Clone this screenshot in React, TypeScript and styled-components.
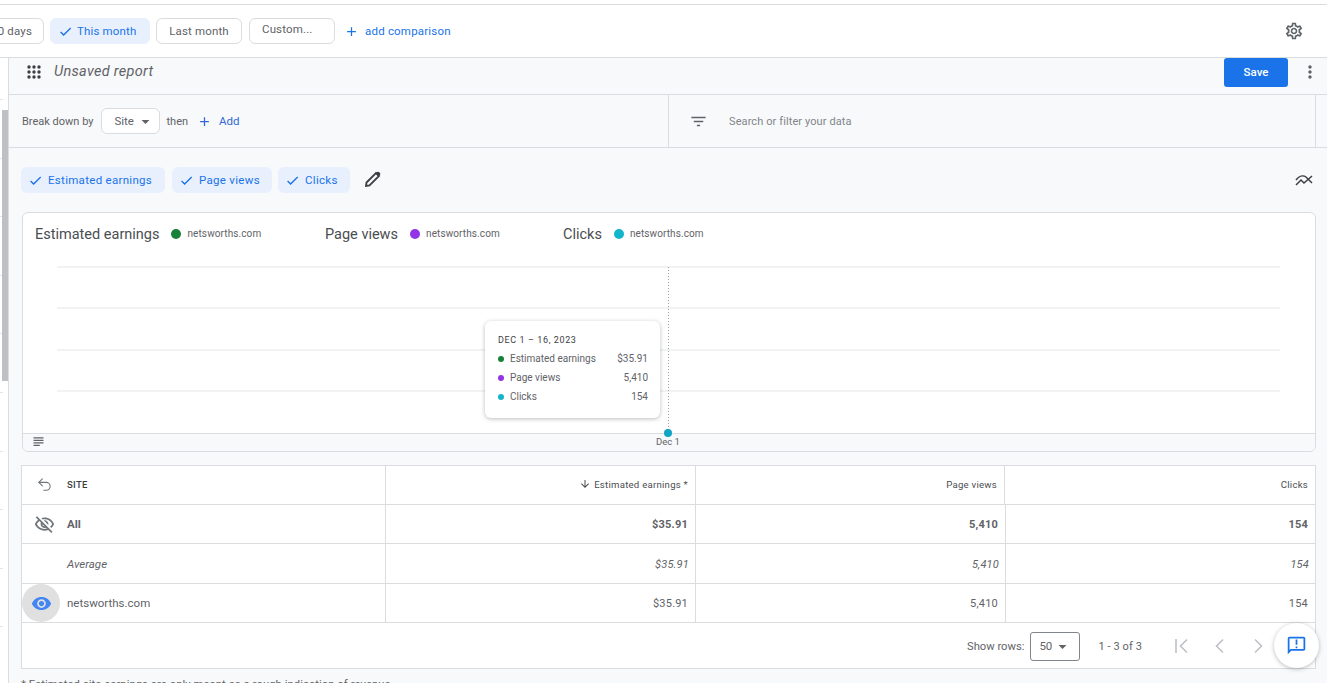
import styled, { createGlobalStyle } from "styled-components";
import { Undo2 } from "lucide-react";
import {
  MdAdd,
  MdArrowDownward,
  MdArrowDropDown,
  MdCheck,
  MdFilterList,
  MdMoreVert,
  MdOutlineAnnouncement,
  MdOutlineSettings,
  MdOutlineVisibilityOff,
  MdSubject,
  MdVisibility,
} from "react-icons/md";

const SITE = "netsworths.com";
const GRID_LINES = [1, 42, 84, 125];

const LEGEND = [
  { label: "Estimated earnings", color: "#188038", width: 290 },
  { label: "Page views", color: "#9334e6", width: 238 },
  { label: "Clicks", color: "#12b5cb", width: 160 },
];

const TOOLTIP = [
  { label: "Estimated earnings", value: "$35.91", color: "#188038" },
  { label: "Page views", value: "5,410", color: "#9334e6" },
  { label: "Clicks", value: "154", color: "#12b5cb" },
];

const GlobalStyle = createGlobalStyle`
  html, body {
    margin: 0;
    padding: 0;
    background: #fff;
    overflow: hidden;
  }
  * {
    box-sizing: border-box;
  }
`;

const Page = styled.div`
  width: 1327px;
  height: 683px;
  overflow: hidden;
  display: flex;
  flex-direction: column;
  font-family: Roboto, "Liberation Sans", sans-serif;
  color: #3c4043;
  background: #fff;
`;

const TopBar = styled.header`
  flex: none;
  height: 54px;
  margin-top: 4px;
  padding: 0 23px 0 0;
  display: flex;
  align-items: center;
  border-top: 1px solid #dadce0;
  border-bottom: 1px solid #dadce0;
`;

const DateChips = styled.div`
  display: flex;
  align-items: center;
  gap: 6px;
  margin-left: -16px;
`;

const DateChip = styled.div<{ $width: number; $active?: boolean }>`
  width: ${(p) => p.$width}px;
  height: 26px;
  display: flex;
  align-items: center;
  justify-content: ${(p) => (p.$active ? "flex-start" : "center")};
  padding: ${(p) => (p.$active ? "0 0 0 7px" : "0")};
  gap: 4px;
  font-size: 11.5px;
  letter-spacing: 0.15px;
  white-space: nowrap;
  border-radius: 6px;
  color: ${(p) => (p.$active ? "#1a73e8" : "#5f6368")};
  background: ${(p) => (p.$active ? "#e8f0fe" : "#fff")};
  border: 1px solid ${(p) => (p.$active ? "#e8f0fe" : "#dadce0")};

  svg {
    font-size: 15px;
  }
`;

const CutChip = styled(DateChip)`
  justify-content: flex-end;
  padding-right: 11px;
`;

const CustomChip = styled(DateChip)`
  margin-left: 1px;
  padding: 0 0 5px 12px;
  justify-content: flex-start;
`;

const AddComparison = styled.div`
  margin-left: 9px;
  display: flex;
  align-items: center;
  gap: 6px;
  font-size: 11.5px;
  letter-spacing: 0.2px;
  color: #1a73e8;

  svg {
    font-size: 15px;
  }
`;

const SettingsIcon = styled(MdOutlineSettings)`
  margin-left: auto;
  font-size: 20px;
  color: #5f6368;
`;

const Body = styled.div`
  flex: 1;
  min-height: 0;
  display: flex;
`;

const Rail = styled.div`
  flex: none;
  width: 9px;
  padding: 52px 0 0 2px;
  background: #fff;
  border-right: 1px solid #dadce0;
  position: relative;
`;

const RailTick = styled.span<{ $top: number }>`
  position: absolute;
  left: 0;
  top: ${(p) => p.$top}px;
  width: 3px;
  height: 1px;
  background: #e3e4e6;
`;

const RailThumb = styled.div`
  width: 6px;
  height: 271px;
  background: #bdc1c6;
  position: relative;
`;

const Main = styled.main`
  flex: 1;
  min-width: 0;
  background: #f8f9fa;
`;

const ReportHeader = styled.div`
  height: 37px;
  padding: 0 7px 9px 18px;
  display: flex;
  align-items: center;
  border-bottom: 1px solid #dadce0;
`;

const ReportTitle = styled.div`
  margin-left: 13px;
  font-size: 14.5px;
  font-style: italic;
  color: #5f6368;
  letter-spacing: 0.3px;
`;

const SaveButton = styled.button`
  align-self: flex-start;
  margin-left: auto;
  width: 64px;
  height: 29px;
  padding: 0 0 2px;
  border: none;
  border-radius: 3px;
  background: #1a73e8;
  color: #fff;
  font-family: inherit;
  font-size: 11.5px;
  font-weight: 500;
`;

const MoreIcon = styled(MdMoreVert)`
  margin-left: 12px;
  font-size: 20px;
  color: #5f6368;
`;

const QueryRow = styled.div`
  height: 53px;
  display: grid;
  grid-template-columns: 660px 647px 1fr;
  border-bottom: 1px solid #dadce0;
`;

const BreakDown = styled.div`
  padding-left: 13px;
  display: flex;
  align-items: center;
  font-size: 11px;
  color: #5f6368;
  border-right: 1px solid #dadce0;
`;

const SiteSelect = styled.div`
  width: 59px;
  height: 26px;
  margin: 0 6px 0 8px;
  padding-left: 12px;
  display: flex;
  align-items: center;
  font-size: 11.5px;
  gap: 2px;
  background: #fff;
  border: 1px solid #dadce0;
  border-radius: 6px;

  svg {
    font-size: 19px;
  }
`;

const AddLink = styled.div`
  margin-left: 9px;
  display: flex;
  align-items: center;
  gap: 7px;
  font-size: 11.5px;
  color: #3367d6;

  svg {
    font-size: 15px;
  }
`;

const SearchCell = styled.div`
  padding-left: 20px;
  display: flex;
  align-items: center;
  gap: 21px;
  font-size: 11px;
  letter-spacing: 0.1px;
  color: #80868b;
  border-right: 1px solid #dadce0;

  svg {
    font-size: 19px;
    color: #5f6368;
  }
`;

const MetricRow = styled.div`
  height: 64px;
  padding: 0 14px 0 12px;
  display: flex;
  align-items: center;
`;

const MetricChip = styled.div<{ $width: number }>`
  width: ${(p) => p.$width}px;
  height: 26px;
  margin-right: 6px;
  padding-left: 7px;
  display: flex;
  align-items: center;
  gap: 5px;
  font-size: 11.5px;
  letter-spacing: 0.3px;
  color: #1a73e8;
  background: #e8f0fe;
  border-radius: 6px;

  svg {
    font-size: 15px;
  }

  &:first-child {
    margin-right: 7px;
  }
`;

const PencilIcon = styled.svg`
  margin: 0 0 2px 9px;
  width: 16px;
  height: 16px;
`;

const TrendIcon = styled.svg`
  margin-left: auto;
  width: 18px;
  height: 14px;
`;

const ChartCard = styled.section`
  width: 1294px;
  height: 240px;
  margin-left: 13px;
  display: flex;
  flex-direction: column;
  background: #fff;
  border: 1px solid #dadce0;
  border-radius: 6px;
  overflow: hidden;
  position: relative;
`;

const Legend = styled.div`
  height: 53px;
  padding: 0 0 11px 12px;
  display: flex;
  align-items: center;
`;

const LegendItem = styled.div<{ $width: number }>`
  width: ${(p) => p.$width}px;
  display: flex;
  align-items: center;
`;

const LegendLabel = styled.span`
  font-size: 14.5px;
  color: #4a4e52;
`;

const Dot = styled.span<{ $color: string; $size: number }>`
  flex: none;
  width: ${(p) => p.$size}px;
  height: ${(p) => p.$size}px;
  border-radius: 50%;
  background: ${(p) => p.$color};
`;

const LegendDot = styled(Dot)`
  margin: 0 6px 0 12px;
`;

const LegendSite = styled.span`
  font-size: 10px;
  letter-spacing: 0.1px;
  color: #5f6368;
  position: relative;
  top: -1px;
`;

const Plot = styled.svg`
  display: block;
  flex: none;
  width: 1292px;
  height: 170px;
  margin-bottom: -3px;
`;

const ChartFooter = styled.div`
  flex: 1;
  padding: 0 0 2px 8px;
  display: flex;
  align-items: center;
  background: #f8f9fa;
  border-top: 1px solid #dadce0;
  color: #5f6368;

  svg {
    font-size: 15px;
  }
`;

const AxisLabel = styled.span`
  margin-left: 610px;
  font-size: 9.5px;
  color: #5f6368;
`;

const AxisDot = styled.span`
  position: absolute;
  left: 641px;
  bottom: 14px;
  width: 8px;
  height: 8px;
  border-radius: 50%;
  background: #12a4c4;
`;

const Tooltip = styled.div`
  position: absolute;
  left: 462px;
  top: 108px;
  width: 175px;
  height: 97px;
  padding: 14px 12px 0 13px;
  background: #fff;
  border-radius: 6px;
  box-shadow: 0 1px 4px rgba(60, 64, 67, 0.35);
`;

const TooltipDate = styled.div`
  margin-bottom: 4px;
  font-size: 9px;
  letter-spacing: 0.6px;
  color: #3c4043;
`;

const TooltipRow = styled.div`
  height: 19px;
  display: flex;
  align-items: center;
  font-size: 10px;
  color: #5f6368;
`;

const TooltipLabel = styled.span`
  margin-left: 6px;
  flex: 1;
`;

const Table = styled.section`
  width: 1295px;
  height: 204px;
  margin: 13px 0 0 12px;
  background: #fff;
  border: 1px solid #dadce0;
  position: relative;
`;

const TableRow = styled.div<{ $height: number; $columns?: string }>`
  height: ${(p) => p.$height}px;
  display: grid;
  grid-template-columns: ${(p) => p.$columns ?? "364px 310px 310px 1fr"};
  border-bottom: 1px solid #dadce0;
`;

const NameCell = styled.div<{ $weight?: number; $italic?: boolean }>`
  display: flex;
  align-items: center;
  font-size: 11.5px;
  font-weight: ${(p) => p.$weight ?? 400};
  font-style: ${(p) => (p.$italic ? "italic" : "normal")};
  color: #5f6368;
  border-right: 1px solid #dadce0;
`;

const HeaderCell = styled(NameCell)`
  padding-bottom: 2px;
`;

const IconSlot = styled.div`
  flex: none;
  width: 45px;
  display: flex;
  justify-content: center;
  color: #70757a;

  svg {
    font-size: 21px;
  }
`;

const EyeSlot = styled(IconSlot)`
  width: 38px;
  height: 38px;
  margin-right: 7px;
  align-items: center;
  border-radius: 50%;
  background: #e0e0e0;
  color: #4285f4;
  position: relative;
  z-index: 1;
`;

const HeaderName = styled.span`
  font-size: 9.5px;
  font-weight: 500;
  letter-spacing: 0.3px;
  color: #3c4043;
`;

const ValueCell = styled.div<{ $weight?: number; $italic?: boolean; $last?: boolean }>`
  padding-right: ${(p) => (p.$italic ? 6 : 7)}px;
  display: flex;
  align-items: center;
  justify-content: flex-end;
  font-size: 11px;
  font-weight: ${(p) => p.$weight ?? 400};
  font-style: ${(p) => (p.$italic ? "italic" : "normal")};
  color: #5f6368;
  letter-spacing: 0.2px;
  border-right: ${(p) => (p.$last ? "none" : "1px solid #dadce0")};
`;

const ItalicValue = styled(ValueCell)`
  padding-top: 1px;
`;

const HeaderValue = styled(ValueCell)`
  padding-bottom: 2px;
  gap: 3px;
  font-size: 9.6px;
  letter-spacing: 0.25px;
  color: #4a4e52;

  svg {
    font-size: 12px;
  }
`;

const Pagination = styled.div`
  height: 45px;
  padding: 1px 49px 0 0;
  display: flex;
  align-items: center;
  justify-content: flex-end;
  font-size: 11.2px;
  color: #5f6368;
`;

const RowsSelect = styled.div`
  width: 50px;
  height: 29px;
  margin: 0 18px 0 6px;
  padding-left: 8px;
  display: flex;
  align-items: center;
  gap: 1px;
  font-size: 11.5px;
  border: 1px solid #80868b;
  border-radius: 3px;

  svg {
    font-size: 19px;
  }
`;

const RangeLabel = styled.span`
  margin-right: 32px;
  font-size: 11px;
  letter-spacing: 0.1px;
`;

const PageIcon = styled.svg`
  width: 16px;
  height: 16px;
  margin-left: 22px;
  stroke: #bdc1c6;
  stroke-width: 1.6;
  fill: none;

  &:first-of-type {
    margin-left: 0;
  }
`;

const FeedbackButton = styled.div`
  position: absolute;
  right: -4px;
  bottom: 0;
  width: 45px;
  height: 45px;
  display: flex;
  align-items: center;
  justify-content: center;
  background: #fff;
  border-radius: 50%;
  box-shadow: 0 1px 4px rgba(60, 64, 67, 0.35);
  color: #1a73e8;

  svg {
    font-size: 21px;
  }
`;

const Footnote = styled.p`
  margin: 9px 0 0 12px;
  font-size: 11.2px;
  letter-spacing: 0.1px;
  color: #5f6368;
`;

const GridDots = () => (
  <svg width="14" height="14" viewBox="0 0 14 14" fill="#3c4043">
    {[2, 7, 12].flatMap((y) =>
      [2, 7, 12].map((x) => <circle key={`${x}-${y}`} cx={x} cy={y} r="1.7" />)
    )}
  </svg>
);

const App = () => {
  return (
    <Page>
      <GlobalStyle />
      <TopBar>
        <DateChips>
          <CutChip $width={60}>90 days</CutChip>
          <DateChip $width={100} $active>
            <MdCheck />
            This month
          </DateChip>
          <DateChip $width={86}>Last month</DateChip>
          <CustomChip $width={86}>Custom...</CustomChip>
        </DateChips>
        <AddComparison>
          <MdAdd />
          add comparison
        </AddComparison>
        <SettingsIcon />
      </TopBar>

      <Body>
        <Rail>
          {[41, 100, 158, 217, 275, 334, 393, 451, 510, 568].map((top) => (
            <RailTick key={top} $top={top} />
          ))}
          <RailThumb />
        </Rail>

        <Main>
          <ReportHeader>
            <GridDots />
            <ReportTitle>Unsaved report</ReportTitle>
            <SaveButton>Save</SaveButton>
            <MoreIcon />
          </ReportHeader>

          <QueryRow>
            <BreakDown>
              Break down by
              <SiteSelect>
                Site
                <MdArrowDropDown />
              </SiteSelect>
              then
              <AddLink>
                <MdAdd />
                Add
              </AddLink>
            </BreakDown>
            <SearchCell>
              <MdFilterList />
              Search or filter your data
            </SearchCell>
          </QueryRow>

          <MetricRow>
            <MetricChip $width={144}>
              <MdCheck />
              Estimated earnings
            </MetricChip>
            <MetricChip $width={100}>
              <MdCheck />
              Page views
            </MetricChip>
            <MetricChip $width={72}>
              <MdCheck />
              Clicks
            </MetricChip>
            <PencilIcon viewBox="0 0 16 16">
              <path d="M1 15l.5-3.5L11 2l3 3-9.5 9.5z" fill="none" stroke="#3c4043" strokeWidth="1.8" />
              <path d="M10.5 2.5L12 1q1-.7 2 0l1 1q.7 1 0 2l-1.5 1.5z" fill="#3c4043" />
            </PencilIcon>
            <TrendIcon viewBox="0 0 18 14" fill="none" stroke="#3c4043" strokeWidth="1.5">
              <path d="M1 7c3-4 7-5 10-3l6 6" />
              <path d="M1 12l5-5 3 3 8-7" />
            </TrendIcon>
          </MetricRow>

          <ChartCard>
            <Legend>
              {LEGEND.map((item) => (
                <LegendItem key={item.label} $width={item.width}>
                  <LegendLabel>{item.label}</LegendLabel>
                  <LegendDot $color={item.color} $size={10} />
                  <LegendSite>{SITE}</LegendSite>
                </LegendItem>
              ))}
            </Legend>
            <Plot viewBox="0 0 1292 170">
              {GRID_LINES.map((y) => (
                <line key={y} x1="34" x2="1257" y1={y} y2={y} stroke="#e4e5e7" strokeWidth="1.2" />
              ))}
              <line x1="645.5" x2="645.5" y1="1" y2="166" stroke="#9aa0a6" strokeWidth="1" strokeDasharray="1 2" />
            </Plot>
            <ChartFooter>
              <MdSubject />
              <AxisLabel>Dec 1</AxisLabel>
            </ChartFooter>
            <Tooltip>
              <TooltipDate>DEC 1 – 16, 2023</TooltipDate>
              {TOOLTIP.map((row) => (
                <TooltipRow key={row.label}>
                  <Dot $color={row.color} $size={6} />
                  <TooltipLabel>{row.label}</TooltipLabel>
                  {row.value}
                </TooltipRow>
              ))}
            </Tooltip>
            <AxisDot />
          </ChartCard>

          <Table>
            <TableRow $height={39} $columns="364px 310px 309px 1fr">
              <HeaderCell>
                <IconSlot>
                  <Undo2 size={17} strokeWidth={1.5} />
                </IconSlot>
                <HeaderName>SITE</HeaderName>
              </HeaderCell>
              <HeaderValue>
                <MdArrowDownward />
                Estimated earnings *
              </HeaderValue>
              <HeaderValue>Page views</HeaderValue>
              <HeaderValue $last>Clicks</HeaderValue>
            </TableRow>
            <TableRow $height={39}>
              <NameCell $weight={700}>
                <IconSlot>
                  <MdOutlineVisibilityOff />
                </IconSlot>
                All
              </NameCell>
              <ValueCell $weight={700}>$35.91</ValueCell>
              <ValueCell $weight={700}>5,410</ValueCell>
              <ValueCell $weight={700} $last>
                154
              </ValueCell>
            </TableRow>
            <TableRow $height={40}>
              <NameCell $italic>
                <IconSlot />
                Average
              </NameCell>
              <ItalicValue $italic>$35.91</ItalicValue>
              <ItalicValue $italic>5,410</ItalicValue>
              <ItalicValue $italic $last>
                154
              </ItalicValue>
            </TableRow>
            <TableRow $height={39}>
              <NameCell>
                <EyeSlot>
                  <MdVisibility />
                </EyeSlot>
                {SITE}
              </NameCell>
              <ValueCell>$35.91</ValueCell>
              <ValueCell>5,410</ValueCell>
              <ValueCell $last>154</ValueCell>
            </TableRow>
            <Pagination>
              Show rows:
              <RowsSelect>
                50
                <MdArrowDropDown />
              </RowsSelect>
              <RangeLabel>1 - 3 of 3</RangeLabel>
              <PageIcon viewBox="0 0 16 16">
                <path d="M2 1v14M13 1.5L6.5 8l6.5 6.5" />
              </PageIcon>
              <PageIcon viewBox="0 0 16 16">
                <path d="M11 1.5L4.5 8l6.5 6.5" />
              </PageIcon>
              <PageIcon viewBox="0 0 16 16">
                <path d="M5 1.5L11.5 8 5 14.5" />
              </PageIcon>
            </Pagination>
            <FeedbackButton>
              <MdOutlineAnnouncement />
            </FeedbackButton>
          </Table>

          <Footnote>* Estimated site earnings are only meant as a rough indication of revenue.</Footnote>
        </Main>
      </Body>
    </Page>
  );
};

export default App;
